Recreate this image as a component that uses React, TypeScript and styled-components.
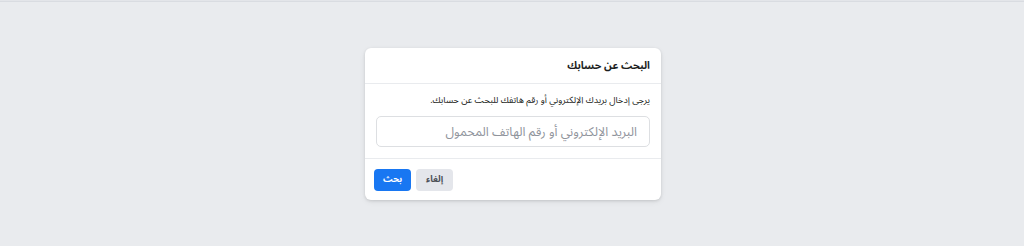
import React from "react";
import styled, { createGlobalStyle } from "styled-components";

const GlobalStyle = createGlobalStyle`
  html, body {
    margin: 0;
    padding: 0;
    background: #e9ebee;
    font-family: "Noto Sans Arabic", "Noto Sans", "Liberation Sans", "DejaVu Sans", sans-serif;
  }
`;

const Page = styled.div`
  min-height: 246px;
  box-sizing: border-box;
  border-top: 1px solid #e3e5e9;
  display: flex;
  justify-content: center;
  padding-top: 47px;
`;

const TopLine = styled.div`
  position: absolute;
  top: 1px;
  left: 0;
  right: 0;
  height: 1px;
  background: #d9dce1;
`;

const Card = styled.div`
  direction: rtl;
  width: 296px;
  height: 152px;
  background: #fff;
  border-radius: 6px;
  box-shadow: 0 1px 3px rgba(0, 0, 0, 0.12), 0 2px 6px rgba(0, 0, 0, 0.06);
  display: flex;
  flex-direction: column;
  margin-left: 2px;
`;

const Header = styled.div`
  height: 35px;
  display: flex;
  align-items: center;
  padding: 0 11px;
  border-bottom: 1px solid #e9ebee;
`;

const Title = styled.h2`
  margin: 0;
  font-size: 10.5px;
  font-weight: bold;
  color: #1c1e21;
`;

const Body = styled.div`
  padding: 8px 11px 11px;
  border-bottom: 1px solid #e9ebee;
  display: flex;
  flex-direction: column;
  gap: 6px;
`;

const Hint = styled.p`
  margin: 0;
  font-size: 9px;
  line-height: 18px;
  color: #1c1e21;
`;

const Input = styled.input`
  direction: rtl;
  height: 31px;
  box-sizing: border-box;
  border: 1px solid #dddfe2;
  border-radius: 5px;
  padding: 0 12px;
  font-family: inherit;
  font-size: 12.5px;
  color: #1c1e21;
  outline: none;

  &::placeholder {
    color: #90949c;
  }
`;

const Footer = styled.div`
  flex: 1;
  display: flex;
  align-items: center;
  justify-content: flex-end;
  gap: 5px;
  padding: 0 9px;
`;

const Button = styled.button<{ $primary?: boolean }>`
  height: 22px;
  min-width: 37px;
  padding: 0 8px;
  border: none;
  border-radius: 4px;
  font-family: inherit;
  font-size: 9px;
  font-weight: bold;
  background: ${(p) => (p.$primary ? "#1877f2" : "#e4e6eb")};
  color: ${(p) => (p.$primary ? "#fff" : "#4b4f56")};
  cursor: pointer;
`;

export default function App() {
  return (
    <>
      <GlobalStyle />
      <TopLine />
      <Page>
        <Card>
          <Header>
            <Title>البحث عن حسابك</Title>
          </Header>
          <Body>
            <Hint>يرجى إدخال بريدك الإلكتروني أو رقم هاتفك للبحث عن حسابك.</Hint>
            <Input placeholder="البريد الإلكتروني أو رقم الهاتف المحمول" />
          </Body>
          <Footer>
            <Button>إلغاء</Button>
            <Button $primary>بحث</Button>
          </Footer>
        </Card>
      </Page>
    </>
  );
}
